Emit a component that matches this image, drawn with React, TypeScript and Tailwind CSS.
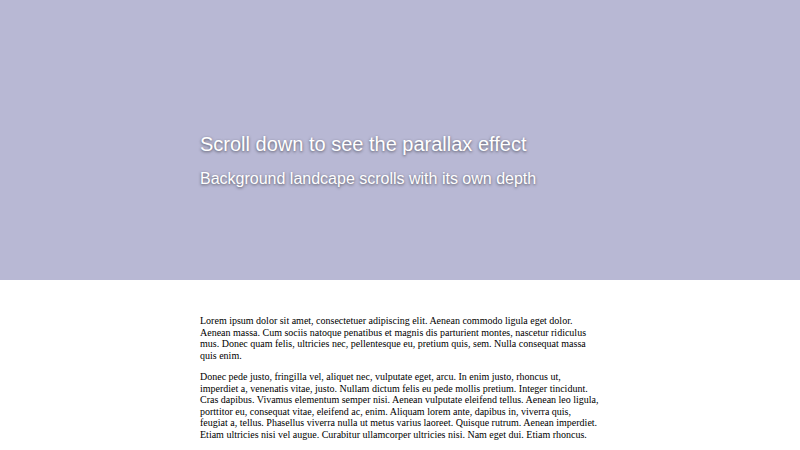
const paragraphs = [
  "Lorem ipsum dolor sit amet, consectetuer adipiscing elit. Aenean commodo ligula eget dolor. Aenean massa. Cum sociis natoque penatibus et magnis dis parturient montes, nascetur ridiculus mus. Donec quam felis, ultricies nec, pellentesque eu, pretium quis, sem. Nulla consequat massa quis enim.",
  "Donec pede justo, fringilla vel, aliquet nec, vulputate eget, arcu. In enim justo, rhoncus ut, imperdiet a, venenatis vitae, justo. Nullam dictum felis eu pede mollis pretium. Integer tincidunt. Cras dapibus. Vivamus elementum semper nisi. Aenean vulputate eleifend tellus. Aenean leo ligula, porttitor eu, consequat vitae, eleifend ac, enim. Aliquam lorem ante, dapibus in, viverra quis, feugiat a, tellus. Phasellus viverra nulla ut metus varius laoreet. Quisque rutrum. Aenean imperdiet. Etiam ultricies nisi vel augue. Curabitur ullamcorper ultricies nisi. Nam eget dui. Etiam rhoncus.",
  "Maecenas tempus, tellus eget condimentum rhoncus, sem quam semper libero, sit amet adipiscing sem neque sed ipsum. Nam quam nunc, blandit vel, luctus pulvinar, hendrerit id, lorem. Maecenas nec odio et ante tincidunt tempus. Donec vitae sapien ut libero venenatis faucibus.",
];

export default function App() {
  return (
    <div className="min-h-screen bg-white">
      {/* hero band */}
      <header className="h-[280px] bg-[#b8b8d4] pt-[133px]">
        <div className="w-[400px] mx-auto font-['Liberation_Sans',Arial,sans-serif] text-white [text-shadow:0_1px_3px_rgba(0,0,0,0.55)]">
          <h1 className="text-[20px] leading-[23px]">Scroll down to see the parallax effect</h1>
          <p className="mt-[14px] text-[16px] leading-[18px]">Background landcape scrolls with its own depth</p>
        </div>
      </header>

      <main className="w-[400px] mx-auto pt-[35px] font-['Liberation_Serif','Times_New_Roman',serif] text-[10px] leading-[11.5px] text-black">
        {paragraphs.map((text, i) => (
          <p key={i} className="mb-[10px]">
            {text}
          </p>
        ))}
      </main>
    </div>
  );
}
